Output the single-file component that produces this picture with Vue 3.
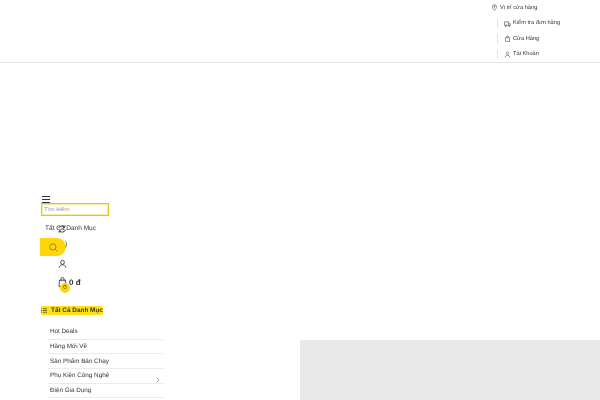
<template>
  <div class="page">
    <header class="topbar">
      <ul class="top-links">
        <li v-for="(l, i) in links" :key="l.label" :class="['top-link', { first: i === 0 }]">
          <svg class="top-icon" viewBox="0 0 12 12" fill="none" stroke="#444" stroke-width="1">
            <path v-for="d in l.paths" :key="d" :d="d" />
          </svg>
          <span>{{ l.label }}</span>
        </li>
      </ul>
    </header>

    <section class="content">
      <div class="left">
        <div class="burger"><i></i><i></i><i></i></div>
        <input class="search" type="text" placeholder="Tìm kiếm" />
        <div class="cat-select">
          <span>Tất Cả Danh Mục</span>
          <svg class="cat-icon" viewBox="0 0 12 12" fill="none" stroke="#222" stroke-width="1">
            <path d="M2 5a4 3.500 0 0 1 7-1.500M10 7a4 3.500 0 0 1-7 1.500" />
            <path d="M9.500 1.500v2.300H7.200M2.500 10.500V8.200h2.300" />
          </svg>
        </div>
        <div class="search-row">
          <button class="search-btn" aria-label="Tìm kiếm">
            <svg viewBox="0 0 14 14" fill="none" stroke="#8a7a10" stroke-width="1">
              <circle cx="6.200" cy="6.200" r="4" />
              <path d="M9.200 9.200l3 3" />
            </svg>
          </button>
          <span class="search-tail">)</span>
        </div>
        <div class="account">
          <svg viewBox="0 0 12 12" fill="none" stroke="#222" stroke-width="1">
            <circle cx="6" cy="3.800" r="2.600" />
            <path d="M1.500 11c.4-2.800 2.200-4 4.500-4s4.100 1.200 4.500 4" />
          </svg>
        </div>
        <div class="cart">
          <svg viewBox="0 0 12 14" fill="none" stroke="#222" stroke-width="1">
            <path d="M2 4.500h8l.7 8.500H1.300z" />
            <path d="M4 6V3a2 2 0 0 1 4 0v3" />
          </svg>
          <b>0 đ</b>
          <span class="badge">0</span>
        </div>

        <div class="cat-title">
          <span class="mark">
            <svg viewBox="0 0 10 8" fill="none" stroke="#222" stroke-width="1">
              <path d="M3 1h7M3 4h7M3 7h7M0 1h1.500M0 4h1.500M0 7h1.500" />
            </svg>
            Tất Cả Danh Mục
          </span>
        </div>
        <ul class="menu">
          <li v-for="m in menu" :key="m.label">
            <span>{{ m.label }}</span>
            <svg v-if="m.sub" class="chev" viewBox="0 0 6 8" fill="none" stroke="#777" stroke-width="0.8">
              <path d="M2 1l3 3-3 3" />
            </svg>
          </li>
        </ul>
      </div>
      <div class="banner"></div>
    </section>
  </div>
</template>

<script setup>
const links = [
  { label: 'Vị trí cửa hàng', paths: ['M6 11C4 8.500 2.500 6.800 2.500 4.700a3.500 3.500 0 0 1 7 0C9.500 6.800 8 8.500 6 11z', 'M6 3.700a1 1 0 1 0 .01 0z'] },
  { label: 'Kiểm tra đơn hàng', paths: ['M1 3h6.500v6H1z', 'M7.500 5h2l1.500 2v2H7.500', 'M3 9.500a1 1 0 1 0 .01 0zM9 9.500a1 1 0 1 0 .01 0z'] },
  { label: 'Cửa Hàng', paths: ['M2.500 4.500h7v6.500h-7z', 'M4.500 4.500V3a1.500 1.500 0 0 1 3 0v1.500'] },
  { label: 'Tài Khoản', paths: ['M6 1.500a2.300 2.300 0 1 0 .01 0z', 'M2 11c.3-2.500 2-3.500 4-3.500s3.700 1 4 3.500'] },
]

const menu = [
  { label: 'Hot Deals' },
  { label: 'Hàng Mới Về' },
  { label: 'Sản Phẩm Bán Chạy' },
  { label: 'Phụ Kiện Công Nghệ', sub: true },
  { label: 'Điện Gia Dụng' },
]
</script>

<style>
html, body { margin: 0; overflow: hidden; background: #fff; }
</style>

<style scoped>
.page {
  width: 600px;
  height: 400px;
  overflow: hidden;
  font-family: "Liberation Sans", Arial, sans-serif;
  color: #333;
  text-rendering: geometricPrecision;
  filter: blur(0.3px);
}

.topbar {
  height: 62px;
  border-bottom: 1px solid #e4e4e4;
  display: flex;
  justify-content: flex-end;
}

.top-links {
  list-style: none;
  margin: 0;
  padding: 0;
  width: 109px;
}

.top-link {
  height: 15.500px;
  display: flex;
  align-items: center;
  gap: 2px;
  font-size: 5.700px;
  color: #333;
  margin-left: 6px;
  padding-left: 7px;
  position: relative;
}

.top-link.first {
  margin-left: 0;
  padding-left: 0;
}

.top-link:not(.first)::before {
  content: '';
  position: absolute;
  left: 0;
  top: 3px;
  bottom: 3px;
  width: 1px;
  background: #e2e2e2;
}

.top-icon {
  width: 7px;
  height: 7px;
  flex: none;
}

.content {
  display: flex;
  height: 337px;
}

.left {
  width: 300px;
  padding: 133px 0 0 40px;
  box-sizing: border-box;
}

.burger {
  width: 8px;
  margin-left: 2px;
  height: 7px;
  display: flex;
  flex-direction: column;
  justify-content: space-between;
}

.burger i {
  display: block;
  height: 1px;
  background: #333;
}

.search {
  display: block;
  box-sizing: border-box;
  width: 68px;
  height: 13px;
  margin: 0 0 0 1px;
  padding: 0 2px 3px;
  border: 1px solid #e0c520;
  outline: none;
  font: 6.200px "Liberation Sans", Arial, sans-serif;
  box-shadow: inset 0 0 0 1px #f7ec9f;
}

.search::placeholder {
  color: #999;
}

.cat-select {
  position: relative;
  margin: 8px 0 0 5px;
  font-size: 6.500px;
  line-height: 10px;
  color: #333;
}

.cat-icon {
  position: absolute;
  left: 12px;
  top: 0;
  width: 10px;
  height: 10px;
}

.search-row {
  display: flex;
  align-items: flex-start;
  margin-top: 4px;
}

.search-btn {
  width: 26px;
  height: 18px;
  padding: 0;
  border: 0;
  background: #ffd60a;
  border-radius: 0 9px 9px 0;
  display: flex;
  align-items: center;
  justify-content: center;
}

.search-btn svg {
  width: 11px;
  height: 11px;
}

.search-tail {
  margin-left: -1px;
  font-size: 7px;
  line-height: 14px;
  color: #444;
}

.account {
  margin: 3px 0 0 18px;
  height: 10px;
}

.account svg {
  display: block;
  width: 9px;
  height: 10px;
}

.cart {
  position: relative;
  display: flex;
  align-items: center;
  gap: 2px;
  margin: 7px 0 0 18px;
  height: 12px;
  font-size: 8px;
  color: #333;
}

.cart svg {
  width: 9px;
  height: 12px;
}

.badge {
  position: absolute;
  left: 2px;
  top: 7px;
  width: 10px;
  height: 10px;
  border-radius: 50%;
  background: #ffd60a;
  font-size: 6px;
  line-height: 10px;
  text-align: center;
}

.cat-title {
  margin: 18px 0 0 1px;
  font-size: 6.400px;
  line-height: 9px;
  font-weight: 700;
  color: #333;
}

.mark {
  display: inline-flex;
  align-items: center;
  gap: 4px;
  background: #ffe014;
  border-radius: 2px;
}

.mark svg {
  width: 6px;
  height: 5px;
}

.menu {
  list-style: none;
  margin: 9px 0 0 8px;
  padding: 0;
  width: 115px;
  font-size: 6.300px;
  color: #333;
}

.menu li {
  height: 14.700px;
  box-sizing: border-box;
  padding-left: 2px;
  border-bottom: 1px solid #ebebeb;
  display: flex;
  align-items: center;
  justify-content: space-between;
}

.chev {
  width: 5px;
  height: 6px;
  margin: 8px 3px 0 0;
}

.banner {
  flex: 1;
  margin-top: 277px;
  height: 60px;
  background: #e9e9e9;
}
</style>
